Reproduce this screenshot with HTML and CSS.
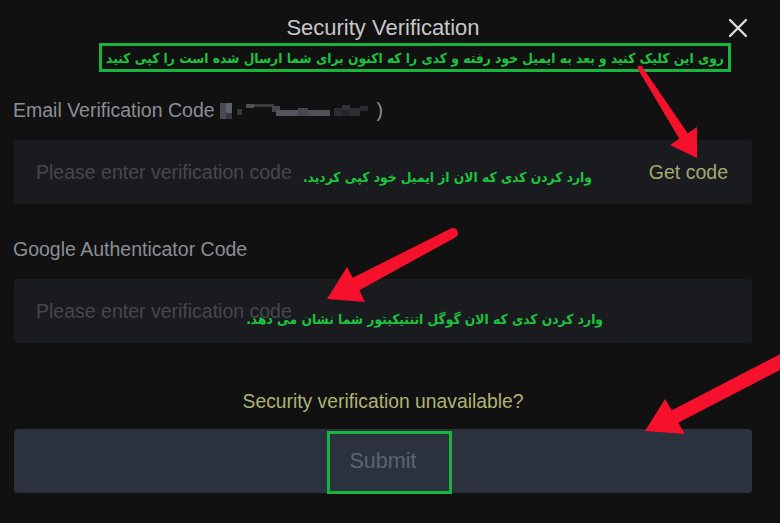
FILE: index.html
```html
<!DOCTYPE html>
<html lang="en">
<head>
<meta charset="utf-8">
<title>Security Verification</title>
<link rel="stylesheet" href="styles.css">
</head>
<body>
<div class="modal">
  <header class="head">
    <h1 class="title">Security Verification</h1>
    <button class="close" aria-label="Close">
      <svg width="18" height="18" viewBox="0 0 18 18"><path d="M1 1L17 17M17 1L1 17" stroke="#dedede" stroke-width="2.4" stroke-linecap="round"/></svg>
    </button>
  </header>

  <div class="field">
    <div class="label">Email Verification Code<span class="masked"><svg width="155" height="18" viewBox="0 0 155 18">
      <rect x="0" y="2" width="6" height="16" fill="#4f5258"/>
      <rect x="6" y="2" width="6" height="10" fill="#676a70"/>
      <rect x="6" y="12" width="6" height="6" fill="#3c3e43"/>
      <rect x="17" y="8" width="5" height="6" fill="#3a3c40"/>
      <rect x="26" y="3" width="8" height="4" fill="#55585e"/>
      <rect x="34" y="3" width="20" height="3" fill="#3f4146"/>
      <rect x="52" y="5" width="8" height="6" fill="#4a4d52"/>
      <rect x="56" y="9" width="22" height="6" fill="#5a5d63"/>
      <rect x="78" y="7" width="10" height="8" fill="#4c4f55"/>
      <rect x="88" y="9" width="22" height="6" fill="#55585e"/>
      <rect x="114" y="7" width="8" height="8" fill="#2e3034"/>
      <rect x="122" y="4" width="8" height="5" fill="#35373b"/>
      <rect x="122" y="9" width="8" height="6" fill="#26282b"/>
      <rect x="130" y="7" width="10" height="8" fill="#313337"/>
      <rect x="140" y="5" width="8" height="5" fill="#2c2e32"/>
    </svg></span>)</div>
    <div class="input">
      <span class="placeholder">Please enter verification code</span>
      <span class="get-code">Get code</span>
    </div>
  </div>

  <div class="field field-second">
    <div class="label">Google Authenticator Code</div>
    <div class="input">
      <span class="placeholder">Please enter verification code</span>
    </div>
  </div>

  <a class="unavailable">Security verification unavailable?</a>
  <button class="submit">Submit</button>
</div>

<div class="note note-top" dir="rtl">روی این کلیک کنید و بعد به ایمیل خود رفته و کدی را که اکنون برای شما ارسال شده است را کپی کنید</div>
<div class="note-text note-email" dir="rtl">وارد کردن کدی که الان از ایمیل خود کپی کردید.</div>
<div class="note-text note-google" dir="rtl">وارد کردن کدی که الان گوگل اتنتیکیتور شما نشان می دهد.</div>
<div class="note-submit"></div>

<svg class="arrows" width="780" height="523" viewBox="0 0 780 523">
  <g fill="#f5102b">
    <polygon points="697,158 697,127 687.7,133.3 642.1,66.7 637.9,69.3 679.3,138.7 670,145"/>
    <circle cx="640" cy="68" r="2.5"/>
    <polygon points="327,299 347,267 352.7,277.8 450.7,228.6 455.3,237.4 359.3,290.2 365,302"/>
    <circle cx="453" cy="233" r="5"/>
    <polygon points="645,431 665,399 671.8,410.3 787.2,350.5 793.6,362.9 678.2,422.7 685,434"/>
  </g>
</svg>
</body>
</html>
```

FILE: styles.css
```css
* { box-sizing: border-box; }

body {
  margin: 0;
  width: 780px;
  height: 523px;
  overflow: hidden;
  position: relative;
  background: #111112;
  font-family: "Liberation Sans", Arial, sans-serif;
}

.modal {
  width: 738px;
  margin-left: 14px;
  display: flex;
  flex-direction: column;
}

.head {
  height: 56px;
  display: grid;
  grid-template-columns: 1fr auto 1fr;
  align-items: center;
}

.title {
  grid-column: 2;
  margin: 0;
  font-size: 22px;
  font-weight: 400;
  line-height: 56px;
  color: #c8c8c8;
}

.close {
  grid-column: 3;
  justify-self: end;
  margin-right: 5px;
  padding: 0;
  border: 0;
  background: none;
  width: 18px;
  height: 18px;
  display: flex;
}

.field {
  display: flex;
  flex-direction: column;
  margin-top: 42px;
}

.field-second { margin-top: 33px; }

.label {
  display: flex;
  align-items: center;
  font-size: 19.5px;
  line-height: 24px;
  color: #8b8e94;
  margin-left: -1px;
}

.masked {
  display: flex;
  margin-left: 5px;
  margin-right: 2px;
  opacity: 0.9;
}

.input {
  margin-top: 18px;
  height: 64px;
  border-radius: 4px;
  background: #1a1b1f;
  display: flex;
  align-items: center;
  justify-content: space-between;
  padding: 0 24px 0 22px;
  font-size: 19.5px;
}

.placeholder { color: #45474d; }

.get-code { color: #a5a870; }

.unavailable {
  margin-top: 47px;
  line-height: 24px;
  text-align: center;
  font-size: 19.3px;
  color: #b0b374;
}

.submit {
  margin-top: 15px;
  height: 64px;
  border: 0;
  border-radius: 4px;
  background: #2b323e;
  color: #5c6371;
  font-family: "Liberation Sans", Arial, sans-serif;
  font-size: 21.5px;
}

.note {
  position: absolute;
  left: 99px;
  top: 43px;
  width: 632px;
  height: 29px;
  border: 3px solid #17b53b;
  display: flex;
  align-items: center;
  justify-content: center;
  white-space: nowrap;
  font-family: "DejaVu Sans Condensed", "DejaVu Sans", sans-serif;
  font-stretch: condensed;
  font-weight: bold;
  font-size: 13.7px;
  color: #1cc33e;
}

.note-text {
  position: absolute;
  white-space: nowrap;
  font-family: "DejaVu Sans Condensed", "DejaVu Sans", sans-serif;
  font-stretch: condensed;
  font-weight: bold;
  font-size: 13.7px;
  line-height: 24px;
  color: #1cc33e;
}

.note-email { right: 188px; top: 165px; }
.note-google { right: 177px; top: 307px; }

.note-submit {
  position: absolute;
  left: 327px;
  top: 431px;
  width: 125px;
  height: 63px;
  border: 3px solid #17b53b;
}

.arrows {
  position: absolute;
  left: 0;
  top: 0;
  pointer-events: none;
}
```
